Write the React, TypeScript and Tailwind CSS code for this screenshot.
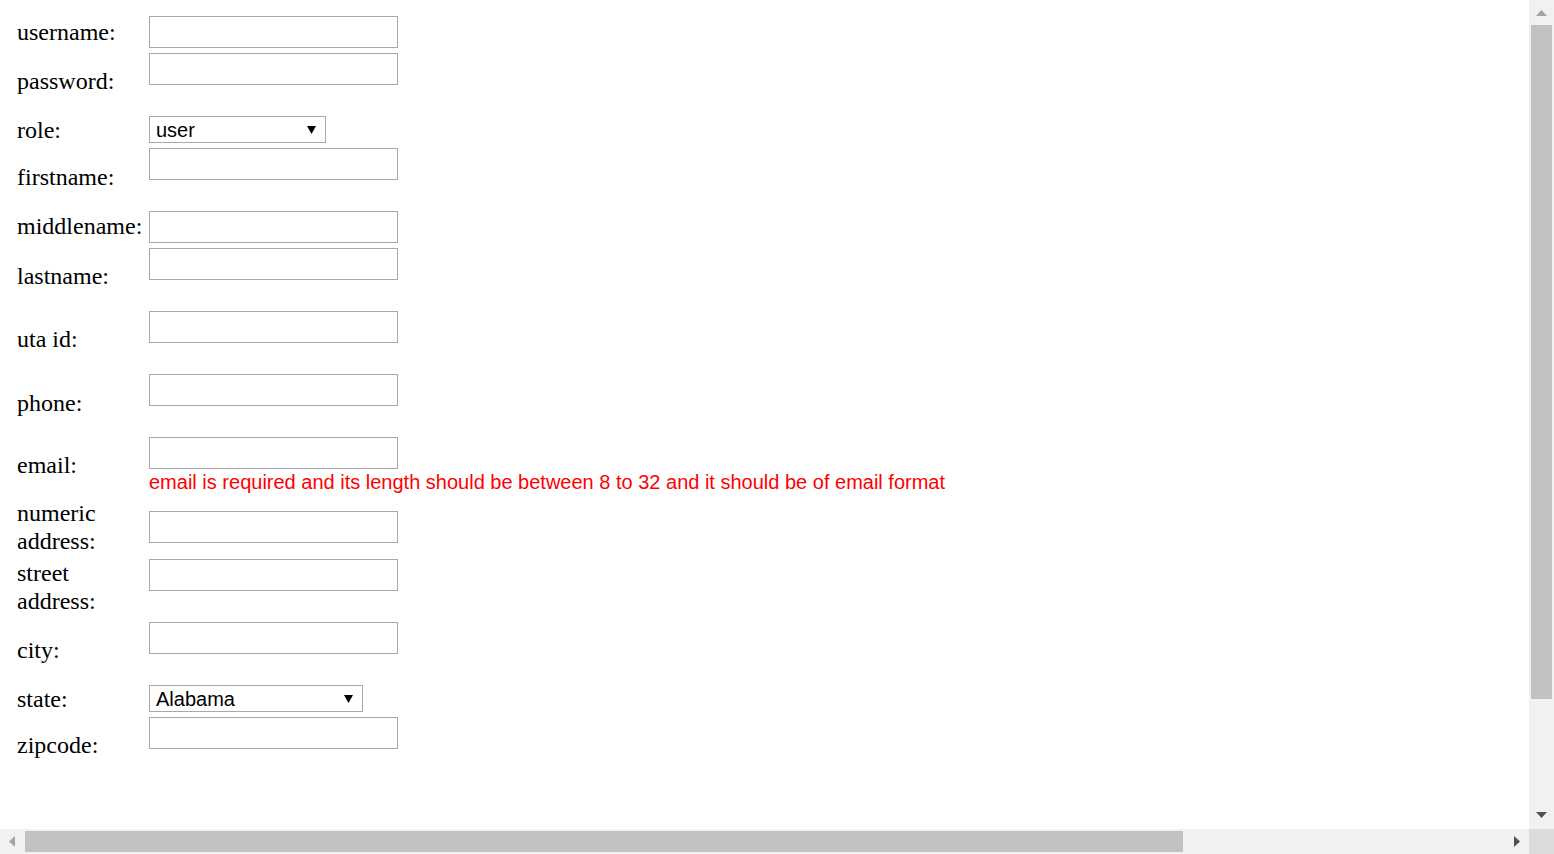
import React from "react";

type Row = {
  label: string;
  kind: "input" | "select";
  height: number;
  labelTop: number;
  fieldTop: number;
  selectValue?: string;
  selectWidth?: number;
  error?: string;
};

const rows: Row[] = [
  { label: "username:", kind: "input", height: 37, labelTop: 3, fieldTop: 0 },
  { label: "password:", kind: "input", height: 62, labelTop: 15, fieldTop: 0 },
  { label: "role:", kind: "select", height: 33, labelTop: 2, fieldTop: 1, selectValue: "user", selectWidth: 177 },
  { label: "firstname:", kind: "input", height: 63, labelTop: 16, fieldTop: 0 },
  { label: "middlename:", kind: "input", height: 37, labelTop: 2, fieldTop: 0 },
  { label: "lastname:", kind: "input", height: 63, labelTop: 15, fieldTop: 0 },
  { label: "uta id:", kind: "input", height: 63, labelTop: 15, fieldTop: 0 },
  { label: "phone:", kind: "input", height: 63, labelTop: 16, fieldTop: 0 },
  {
    label: "email:",
    kind: "input",
    height: 61,
    labelTop: 15,
    fieldTop: 0,
    error: "email is required and its length should be between 8 to 32 and it should be of email format",
  },
  { label: "numeric address:", kind: "input", height: 61, labelTop: 2, fieldTop: 13 },
  { label: "street address:", kind: "input", height: 63, labelTop: 1, fieldTop: 0 },
  { label: "city:", kind: "input", height: 63, labelTop: 15, fieldTop: 0 },
  { label: "state:", kind: "select", height: 32, labelTop: 1, fieldTop: 0, selectValue: "Alabama", selectWidth: 214 },
  { label: "zipcode:", kind: "input", height: 63, labelTop: 15, fieldTop: 0 },
];

const marginTops: Record<number, string> = {
  0: "mt-0",
  1: "mt-[1px]",
  2: "mt-[2px]",
  3: "mt-[3px]",
  13: "mt-[13px]",
  15: "mt-[15px]",
  16: "mt-[16px]",
};

const heights: Record<number, string> = {
  32: "h-[32px]",
  33: "h-[33px]",
  37: "h-[37px]",
  61: "h-[61px]",
  62: "h-[62px]",
  63: "h-[63px]",
};

function Arrow({ dir, color }: { dir: "up" | "down" | "left" | "right"; color: string }) {
  const vertical = dir === "up" || dir === "down";
  const points = {
    up: "5.5,0 11,6 0,6",
    down: "0,0 11,0 5.5,6",
    left: "6,0 6,11 0,5.5",
    right: "0,0 6,5.5 0,11",
  }[dir];
  return (
    <svg width={vertical ? 11 : 6} height={vertical ? 6 : 11} viewBox={vertical ? "0 0 11 6" : "0 0 6 11"}>
      <polygon points={points} fill={color} />
    </svg>
  );
}

function FakeSelect({ value, width }: { value: string; width: number }) {
  return (
    <div
      className={`flex h-[27px] items-center justify-between border border-[#a9a9a9] bg-white pl-[6px] pr-[9px] font-['Liberation_Sans',Arial,sans-serif] text-[20px] leading-[23px] text-black ${
        width === 177 ? "w-[177px]" : "w-[214px]"
      }`}
    >
      <span className="pt-[2px]">{value}</span>
      <svg width="9" height="8" viewBox="0 0 9 8">
        <polygon points="0,0 9,0 4.5,8" fill="#000" />
      </svg>
    </div>
  );
}

function FormRow({ row }: { row: Row }) {
  return (
    <div className={`flex items-start ${heights[row.height]}`}>
      <div
        className={`w-[132px] shrink-0 font-['Liberation_Serif','Times_New_Roman',serif] text-[24px] leading-[27.6px] text-black ${marginTops[row.labelTop]}`}
      >
        {row.label}
      </div>
      <div className={`flex flex-col ${marginTops[row.fieldTop]}`}>
        {row.kind === "input" ? (
          <input type="text" className="h-[32px] w-[249px] border border-[#a9a9a9] bg-white px-[3px] outline-none" />
        ) : (
          <FakeSelect value={row.selectValue ?? ""} width={row.selectWidth ?? 177} />
        )}
        {row.error && (
          <div className="mt-[2px] whitespace-nowrap font-['Liberation_Sans',Arial,sans-serif] text-[20px] leading-[23px] text-[#ff0000]">
            {row.error}
          </div>
        )}
      </div>
    </div>
  );
}

export default function App() {
  return (
    <div className="flex h-screen w-full flex-col overflow-hidden bg-white">
      <div className="flex min-h-0 flex-1">
        <main className="flex-1 overflow-hidden pl-[17px] pt-[16px]">
          <form className="flex flex-col">
            {rows.map((row) => (
              <FormRow key={row.label} row={row} />
            ))}
          </form>
        </main>

        {/* vertical scrollbar */}
        <div className="flex w-[25px] shrink-0 flex-col items-center bg-[#f1f1f1]">
          <div className="flex h-[25px] w-full items-start justify-center pt-[10px]">
            <Arrow dir="up" color="#a3a3a3" />
          </div>
          <div className="h-[674px] w-[21px] bg-[#c1c1c1]" />
          <div className="flex-1" />
          <div className="flex h-[25px] w-full items-start justify-center pt-[8px]">
            <Arrow dir="down" color="#505050" />
          </div>
        </div>
      </div>

      {/* horizontal scrollbar */}
      <div className="flex h-[25px] shrink-0">
        <div className="flex flex-1 items-center bg-[#f1f1f1]">
          <div className="flex h-full w-[25px] items-center justify-start pl-[9px]">
            <Arrow dir="left" color="#a3a3a3" />
          </div>
          <div className="h-[21px] w-[1158px] bg-[#c1c1c1]" />
          <div className="flex-1" />
          <div className="flex h-full w-[25px] items-center justify-start pl-[10px]">
            <Arrow dir="right" color="#505050" />
          </div>
        </div>
        <div className="w-[25px] bg-[#dcdcdc]" />
      </div>
    </div>
  );
}
